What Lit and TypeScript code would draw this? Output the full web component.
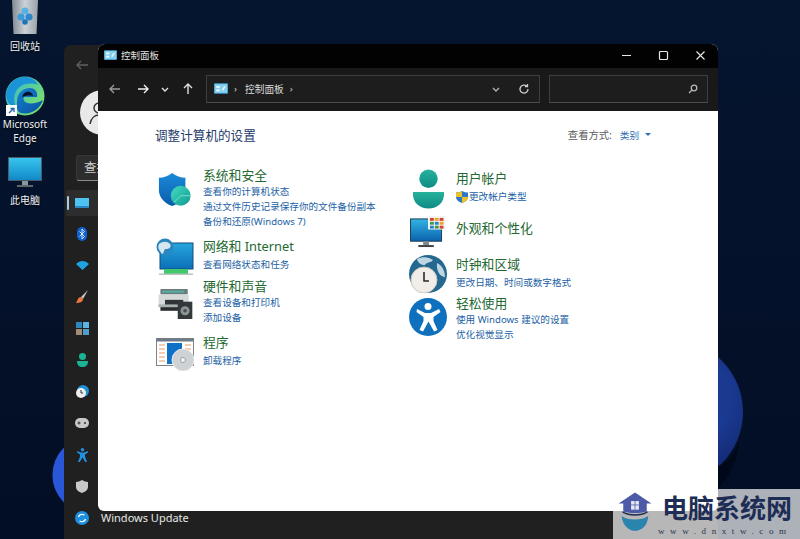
import { LitElement, css, html } from 'lit';
import { customElement } from 'lit/decorators.js';

const cpIcon = (w: number, h: number) => html`<svg width=${w} height=${h} viewBox="0 0 16 12">
  <rect width="16" height="12" rx="1" fill="#3f9fd0"/>
  <rect x="1" y="1" width="14" height="10" fill="#86d0ee"/>
  <path d="M2.500 3h4v2h-4zM9 7.500l3-4.500 1.200 1-3 4.500zM2.500 7h4v2h-4z" fill="#f2f8fc"/>
</svg>`;

const arrow = (d: string, color: string) => html`<svg width="14" height="14" viewBox="0 0 14 14" fill="none" stroke=${color} stroke-width="1.4"><path d=${d}/></svg>`;

const ICONS: Record<string, unknown> = {
  shield: html`<svg width="36" height="36" viewBox="0 0 38 38">
    <defs><linearGradient id="sh" x1="0" y1="0" x2="0" y2="1"><stop offset="0" stop-color="#1a8ad8"/><stop offset="1" stop-color="#0b5cab"/></linearGradient>
    <linearGradient id="sg" x1="0" y1="0" x2="1" y2="1"><stop offset="0" stop-color="#45dcc0"/><stop offset="1" stop-color="#0f9a94"/></linearGradient></defs>
    <path d="M16 1c4 3 9 5 14 5v13c0 8-6 14-14 17C8 33 2 27 2 19V6c5 0 10-2 14-5z" fill="url(#sh)"/>
    <circle cx="25" cy="25" r="10.500" fill="url(#sg)"/><path d="M25 25l-7 7M25 25h10" stroke="#8cebd8" stroke-width=".8"/>
  </svg>`,
  network: html`<svg width="38" height="38" viewBox="0 0 38 38">
    <defs><linearGradient id="nt" x1="0" y1="0" x2="0" y2="1"><stop offset="0" stop-color="#27a6dc"/><stop offset="1" stop-color="#0b6fb8"/></linearGradient></defs>
    <rect x="4" y="5" width="33" height="26" fill="url(#nt)" stroke="#0d4f7f"/>
    <rect x="8" y="31" width="24" height="5" fill="#42c76a"/><rect x="3" y="35.500" width="34" height="1.500" fill="#b8c4c0"/>
    <circle cx="9" cy="9" r="8.500" fill="#2a86bd"/><path d="M3 6c4-3 8-3 11 0 2 3-1 5-4 5s-1 4-4 5c-2-3-5-6-3-10z" fill="#d4e7f0"/>
  </svg>`,
  printer: html`<svg width="38" height="31" viewBox="0 0 38 34">
    <rect x="3" y="1" width="30" height="6" rx="1" fill="#6f7a7c"/><rect x="1" y="7" width="33" height="14" fill="#d5dad9"/>
    <rect x="8" y="13" width="20" height="6" fill="#303436"/><rect x="1" y="18" width="33" height="3" fill="#a9b0b0"/>
    <rect x="3" y="21" width="26" height="4" fill="#2b2d2e"/><rect x="5" y="3" width="24" height="2" fill="#4cb6a6"/>
    <rect x="22" y="15" width="16" height="19" fill="#33383a"/><circle cx="30" cy="25" r="5" fill="#8d9496"/><circle cx="30" cy="25" r="2" fill="#4a4f51"/>
  </svg>`,
  programs: html`<svg width="38" height="33" viewBox="0 0 38 33">
    <rect x=".5" y=".5" width="37" height="27" fill="#fff" stroke="#7d8287"/><rect x=".5" y=".5" width="37" height="3" fill="#6f7b86"/>
    <rect x="11" y="5" width="15" height="21" fill="#0f70c8"/>
    <path d="M3 7h6M3 11h6M3 15h6M3 19h6M3 23h6M29 7h6M29 11h6" stroke="#e79a6a" stroke-width="1.200"/>
    <circle cx="27" cy="22" r="11" fill="#cfd2d4"/><circle cx="27" cy="22" r="11" fill="none" stroke="#e8e9ea"/><circle cx="27" cy="22" r="2.500" fill="#f4f4f4" stroke="#9c9fa1"/>
  </svg>`,
  user: html`<svg width="33" height="40" viewBox="0 0 34 40">
    <defs><linearGradient id="us" x1="0" y1="0" x2="0" y2="1"><stop offset="0" stop-color="#26b39c"/><stop offset="1" stop-color="#0e8a84"/></linearGradient></defs>
    <circle cx="17" cy="9.500" r="9.500" fill="url(#us)"/><path d="M1 23h32c1 11-7 17-16 17S0 34 1 23z" fill="url(#us)"/>
  </svg>`,
  display: html`<svg width="36" height="32" viewBox="0 0 36 33">
    <defs><linearGradient id="ds" x1="0" y1="0" x2="0" y2="1"><stop offset="0" stop-color="#32b4e3"/><stop offset="1" stop-color="#0b62ae"/></linearGradient></defs>
    <rect x="0" y="3" width="32" height="23" fill="url(#ds)" stroke="#1d3c50"/><rect x="13" y="26" width="6" height="4" fill="#7d8a90"/><rect x="8" y="30" width="16" height="2" fill="#3a4043"/>
    <rect x="18" y="0" width="18" height="14" rx="1" fill="#f5f5f5"/>
    <rect x="20" y="2" width="4" height="3" fill="#d8402d"/><rect x="25" y="2" width="4" height="3" fill="#e8a722"/><rect x="30" y="2" width="4" height="3" fill="#d8402d"/>
    <rect x="20" y="6" width="4" height="3" fill="#3c9b45"/><rect x="25" y="6" width="4" height="3" fill="#2d7ed0"/><rect x="30" y="6" width="4" height="3" fill="#e8a722"/>
    <rect x="20" y="10" width="4" height="3" fill="#2d7ed0"/><rect x="25" y="10" width="4" height="3" fill="#3c9b45"/><rect x="30" y="10" width="4" height="3" fill="#d8402d"/>
  </svg>`,
  clock: html`<svg width="38" height="38" viewBox="0 0 38 38">
    <circle cx="19" cy="19" r="19" fill="#25688f"/><path d="M8 4c6-3 12-2 16 1-2 3-7 2-8 5-4 0-7-2-8-6zM28 8c5 2 8 8 8 14-4 0-9-5-8-14z" fill="#bfd5e2"/>
    <circle cx="15" cy="25" r="13" fill="#f1eee9"/><circle cx="15" cy="25" r="13" fill="none" stroke="#c9c4bd"/>
    <path d="M15 17v9h5" fill="none" stroke="#2b2b2b" stroke-width="1.600"/>
  </svg>`,
  access: html`<svg width="38" height="38" viewBox="0 0 38 38">
    <circle cx="19" cy="19" r="19" fill="#0f71bd"/>
    <circle cx="19" cy="8.500" r="3.500" fill="#fff"/>
    <path d="M8 11l8 4h6l8-4 1.500 3-7 5v4l4 9-3.500 1.500-5.500-10-5.500 10L10.500 32l4-9v-4l-7-5z" fill="#fff"/>
  </svg>`,
};

const SIDE_ICONS = [
  html`<svg width="14" height="10" viewBox="0 0 14 10"><rect width="14" height="10" fill="#4fc3f0"/><rect y="8" width="14" height="2" fill="#2b86c4"/></svg>`,
  html`<svg width="10" height="14" viewBox="0 0 10 14"><rect width="10" height="14" rx="5" fill="#0f62d0"/><path d="M2.500 4.500l5 5L5 12V2l2.500 2.500-5 5" fill="none" stroke="#fff" stroke-width=".8"/></svg>`,
  html`<svg width="13" height="9" viewBox="0 0 13 9"><path d="M0 3c4-4 9-4 13 0L6.500 9z" fill="#1fa3e0"/></svg>`,
  html`<svg width="14" height="14" viewBox="0 0 14 14"><path d="M13 0L6 7l2 2z" fill="#c9c9c9"/><path d="M6 7c-3 0-3 3-5 6 4 0 7-1 7-4z" fill="#e8793a"/></svg>`,
  html`<svg width="13" height="13" viewBox="0 0 13 13"><rect width="6" height="6" fill="#2f86b8"/><rect x="7" width="6" height="6" fill="#5cb4e0"/><rect y="7" width="6" height="6" fill="#a08a78"/><rect x="7" y="7" width="6" height="6" fill="#4d9ecb"/></svg>`,
  html`<svg width="11" height="14" viewBox="0 0 11 14"><circle cx="5.500" cy="3.500" r="3.500" fill="#1ab393"/><path d="M0 8h11c0 4-2 6-5.500 6S0 12 0 8z" fill="#1ab393"/></svg>`,
  html`<svg width="14" height="14" viewBox="0 0 14 14"><circle cx="8" cy="6" r="6" fill="#1f8fd6"/><circle cx="6" cy="8" r="5" fill="#eee"/><path d="M6 5v3h2" fill="none" stroke="#333"/></svg>`,
  html`<svg width="14" height="10" viewBox="0 0 14 10"><rect width="14" height="10" rx="5" fill="#c8c8c8"/><path d="M2.500 5h3M4 3.500v3" stroke="#333"/><circle cx="10" cy="5" r="1" fill="#333"/></svg>`,
  html`<svg width="11" height="14" viewBox="0 0 11 14"><circle cx="5.500" cy="1.800" r="1.800" fill="#1f8fe0"/><path d="M0 3l4 1.500h3L11 3v1.500L8 6.500v2L10 14H8.200L5.500 9.500 2.800 14H1l2-5.500v-2L0 4.500z" fill="#1f8fe0"/></svg>`,
  html`<svg width="12" height="13" viewBox="0 0 12 13"><path d="M6 0c2 1 4 2 6 2v5c0 3-3 5-6 6-3-1-6-3-6-6V2c2 0 4-1 6-2z" fill="#c9c9c9"/></svg>`,
  html`<svg width="14" height="14" viewBox="0 0 14 14"><circle cx="7" cy="7" r="7" fill="#1d8fe0"/><path d="M3.500 6c.5-2 3-3.500 6-2M10.500 8c-.5 2-3 3.500-6 2" fill="none" stroke="#fff" stroke-width="1.300"/></svg>`,
];

// iconY: how far the icon sits below the top of its title line
type Cat = { icon: string; iconY: number; title: string; links: string[]; shield?: boolean };

const LEFT: Cat[] = [
  { icon: 'shield', iconY: 5, title: '系统和安全', links: ['查看你的计算机状态', '通过文件历史记录保存你的文件备份副本', '备份和还原(Windows 7)'] },
  { icon: 'network', iconY: 0, title: '网络和 Internet', links: ['查看网络状态和任务'] },
  { icon: 'printer', iconY: 10, title: '硬件和声音', links: ['查看设备和打印机', '添加设备'] },
  { icon: 'programs', iconY: 4.5, title: '程序', links: ['卸载程序'] },
];

const RIGHT: Cat[] = [
  { icon: 'user', iconY: -1, title: '用户帐户', links: ['更改帐户类型'], shield: true },
  { icon: 'display', iconY: -4, title: '外观和个性化', links: [] },
  { icon: 'clock', iconY: -1, title: '时钟和区域', links: ['更改日期、时间或数字格式'] },
  { icon: 'access', iconY: 3, title: '轻松使用', links: ['使用 Windows 建议的设置', '优化视觉显示'] },
];

@customElement('app-root')
export class AppRoot extends LitElement {
  static styles = css`
    :host {
      display: block;
      width: 800px;
      height: 539px;
      overflow: hidden;
      font-family: 'Noto Sans', 'Noto Sans CJK SC', sans-serif;
    }
    .desktop {
      position: relative;
      width: 800px;
      height: 539px;
      overflow: hidden;
      background: linear-gradient(180deg, #06152f 0%, #04122b 40%, #020e24 100%);
    }
    .bloom {
      position: absolute;
      left: 0;
      top: 0;
    }
    .desk-icon {
      position: absolute;
      left: 0;
      width: 50px;
      display: flex;
      flex-direction: column;
      align-items: center;
      color: #eef2f6;
      font-size: 10px;
      line-height: 14px;
      text-align: center;
      text-shadow: 0 1px 2px #000;
    }
    .bin { top: 0; }
    .bin div { margin-top: 4px; }
    .edge { top: 76px; }
    .pc { top: 157px; }
    .pc div { margin-top: 5px; }
    .settings {
      position: absolute;
      left: 64px;
      top: 45px;
      width: 654px;
      height: 494px;
      background: #202020;
      border-radius: 7px 7px 0 0;
      overflow: hidden;
    }
    .settings .back {
      padding: 12px 0 0 11px;
      height: 23px;
      margin-top: -2px;
      margin-bottom: 2px;
    }
    .avatar {
      width: 45px;
      height: 45px;
      margin: 12px 0 0 16px;
      border-radius: 50%;
      background: #e9e9e9;
      overflow: hidden;
    }
    .find {
      margin: 20px 0 0 12px;
      width: 160px;
      height: 26px;
      box-sizing: border-box;
      background: #2d2d2d;
      border: 1px solid #383838;
      border-bottom-color: #8a8a8a;
      border-radius: 3px;
      color: #cfcfcf;
      font-size: 12.500px;
      line-height: 24px;
      padding-left: 7px;
    }
    .nav {
      margin-top: 6px;
    }
    .nav-row {
      position: relative;
      box-sizing: border-box;
      height: 31.500px;
      padding: 3px 0;
      background-clip: content-box;
      display: flex;
      align-items: center;
      margin-left: 2px;
    }
    .nav-row.on {
      background-color: #2d2d2d;
    }
    .nav-row.on::before {
      content: '';
      position: absolute;
      left: 1px;
      top: 9px;
      width: 2px;
      height: 14px;
      background: #a5cde8;
      border-radius: 1px;
    }
    .nav-ico {
      width: 32px;
      display: flex;
      justify-content: center;
    }
    .nav-row span {
      margin-left: 3px;
      color: #e6e6e6;
      font-size: 11px;
    }
    .cp {
      position: absolute;
      left: 98px;
      top: 44px;
      width: 620px;
      height: 467px;
      display: flex;
      flex-direction: column;
      border-radius: 7px 7px 6px 6px;
      overflow: hidden;
      background: #fff;
    }
    .title {
      height: 24px;
      flex: none;
      box-sizing: border-box;
      padding: 0 0 2px 6px;
      background: #020202;
      display: flex;
      align-items: center;
      color: #e4e4e4;
      font-size: 9.500px;
    }
    .title span {
      margin-left: 4px;
    }
    .win-btns {
      margin-left: auto;
      margin-right: -1px;
      display: flex;
    }
    .win-btns div {
      width: 37px;
      height: 22px;
      display: flex;
      align-items: center;
      justify-content: center;
    }
    .tools {
      height: 43px;
      flex: none;
      box-sizing: border-box;
      background: #191919;
      display: flex;
      align-items: center;
      padding: 0 10px 2px 9px;
    }
    .navs {
      display: flex;
      align-items: center;
      width: 99px;
      margin-left: -5px;
      padding-right: 5px;
    }
    .navs div {
      width: 25px;
      display: flex;
      justify-content: center;
    }
    .navs .fwd { margin-left: 3px; }
    .navs .recent { margin-left: -3px; }
    .navs .up { margin-left: -2px; }
    .box {
      height: 28px;
      box-sizing: border-box;
      border: 1px solid #3f3f3f;
      border-bottom-color: #4c4c4c;
      background: #1d1d1d;
      display: flex;
      align-items: center;
      color: #dcdcdc;
      font-size: 9.700px;
    }
    .addr {
      width: 334px;
      padding: 0 9px 0 7px;
    }
    .addr .sep {
      margin: 0 8px 0 6px;
      color: #cfcfcf;
    }
    .addr .end {
      margin-left: auto;
      display: flex;
      align-items: center;
      gap: 15px;
    }
    .search {
      width: 159px;
      margin-left: 9px;
      justify-content: flex-end;
      padding-right: 9px;
    }
    .content {
      flex: 1;
      padding: 15px 67px 0 57px;
    }
    .head {
      display: flex;
      justify-content: space-between;
      align-items: center;
      height: 17px;
    }
    .head h1 {
      margin: 0;
      font-size: 12.600px;
      font-weight: 400;
      color: #1f3b6b;
    }
    .view {
      font-size: 10.300px;
      color: #5c5c5c;
      display: flex;
      align-items: center;
    }
    .view b {
      font-size: 9.600px;
      font-weight: 400;
      color: #2b6fb5;
      margin-left: 8px;
    }
    .view i {
      margin-left: 6px;
      border: 3px solid transparent;
      border-top: 3px solid #2b6fb5;
      border-bottom: 0;
    }
    .cols {
      display: flex;
    }
    .col {
      display: flex;
      flex-direction: column;
    }
    .col.l {
      width: 253px;
      padding-top: 24px;
    }
    .col.r {
      padding-top: 27px;
    }
    .cat {
      display: flex;
    }
    .cat .ico {
      width: 40px;
      height: 0;
      margin-right: 8px;
      flex: none;
      display: flex;
      justify-content: center;
      align-items: flex-start;
      position: relative;
    }
    .cat h2 {
      margin: 0 0 1px;
      font-size: 12.800px;
      line-height: 16px;
      font-weight: 400;
      color: #22682f;
      white-space: nowrap;
    }
    .cat.single h2 {
      margin-bottom: 3px;
    }
    .cat a {
      display: flex;
      align-items: center;
      font-size: 9.600px;
      line-height: 15px;
      color: #1c5fa5;
      white-space: nowrap;
    }
    .cat a svg {
      margin-right: 1px;
    }
    .l .cat:nth-child(2) { margin-top: 9px; }
    .l .cat:nth-child(3) { margin-top: 6px; }
    .l .cat:nth-child(4) { margin-top: 8.500px; }
    .r .cat:nth-child(2) { margin-top: 16px; }
    .r .cat:nth-child(3) { margin-top: 19px; }
    .r .cat:nth-child(4) { margin-top: 5px; }
    .mark {
      position: absolute;
      left: 613px;
      top: 489px;
      width: 187px;
      height: 50px;
      background: rgba(255, 255, 255, 0.68);
      display: flex;
    }
    .mark .logo {
      margin-left: 4px;
      flex: none;
    }
    .mark .txt {
      margin-left: 9px;
      padding-top: 6px;
    }
    .mark .big {
      font-family: 'Liberation Serif', 'Noto Sans CJK SC', serif;
      font-weight: 700;
      font-size: 26px;
      line-height: 30px;
      color: #1d2d55;
      white-space: nowrap;
    }
    .mark .url {
      font-family: 'Liberation Serif', serif;
      font-size: 9px;
      letter-spacing: 5.600px;
      line-height: 12px;
      color: #2a3550;
      margin-left: -4px;
      white-space: nowrap;
    }
  `;

  renderCat(c: Cat) {
    return html`<div class="cat ${c.links.length === 1 ? 'single' : ''}">
      <div class="ico" style="top:${c.iconY}px">${ICONS[c.icon]}</div>
      <div>
        <h2>${c.title}</h2>
        ${c.links.map((l) => html`<a>
          ${c.shield ? html`<svg width="12" height="12" viewBox="0 0 12 12"><path d="M6 0c2 1 4 1.500 6 1.500V6c0 3-3 5-6 6-3-1-6-3-6-6V1.500C2 1.500 4 1 6 0z" fill="#2b78c6"/><path d="M6 0v6H0V1.500C2 1.500 4 1 6 0zM6 6h6c0 3-3 5-6 6z" fill="#f0c028"/></svg>` : ''}
          ${l}</a>`)}
      </div>
    </div>`;
  }

  render() {
    return html`<div class="desktop">
      <svg class="bloom" width="800" height="539" viewBox="0 0 800 539">
        <defs>
          <radialGradient id="bl" cx="0.6" cy="0.4" r="0.6"><stop offset="0.5" stop-color="#1a3a92"/><stop offset="0.85" stop-color="#142c78"/><stop offset="1" stop-color="#0a1a50"/></radialGradient>
        </defs>
        <circle cx="670" cy="412" r="73" fill="url(#bl)"/>
        <path d="M718 466c8-2 16-12 21-24-1 20-12 38-21 46z" fill="#01081a"/>
        <circle cx="91" cy="475" r="38.600" fill="#2a56d8"/>
      </svg>

      <div class="desk-icon bin">
        <svg width="28" height="35" viewBox="0 0 28 35">
          <defs><linearGradient id="bn" x1="0" y1="0" x2="1" y2="0"><stop offset="0" stop-color="#7f8a91"/><stop offset="0.5" stop-color="#ccd3d8"/><stop offset="1" stop-color="#98a2a8"/></linearGradient></defs>
          <path d="M1 0h26l-1.500 34h-23z" fill="url(#bn)"/>
          <circle cx="10" cy="17" r="3.600" fill="#3b9ad8"/><circle cx="18" cy="17" r="3.600" fill="#2f86c8"/><circle cx="14" cy="11" r="3.600" fill="#58b2e4"/><circle cx="14" cy="22" r="2.800" fill="#1f74b8"/>
        </svg>
        <div>回收站</div>
      </div>
      <div class="desk-icon edge">
        <svg width="40" height="41" viewBox="0 0 40 41">
          <defs><linearGradient id="eg" x1="0" y1="0" x2="1" y2="0.700"><stop offset="0" stop-color="#2fb5d8"/><stop offset="1" stop-color="#7ae06a"/></linearGradient>
          <linearGradient id="eb" x1="0" y1="0" x2="1" y2="1"><stop offset="0" stop-color="#1482d0"/><stop offset="1" stop-color="#0b4ea0"/></linearGradient></defs>
          <circle cx="20" cy="20" r="19.500" fill="url(#eg)"/>
          <path d="M1 19C2 9 10 1 20 1c6 0 11 3 13 8-5-2-12-2-17 1C9 14 7 24 12 33 5 30 1 25 1 19z" fill="#1b93d8"/>
          <path d="M12 26c0-9 6-14 13-14 5 0 8 4 7 9H21c-3-1-4 4 1 6 5 1 11 0 16-3-3 9-12 15-22 13-5-2-4-6-4-11z" fill="url(#eb)"/>
          <path d="M17 21c1-4 4-6 8-5 2 1 3 3 3 4-4-1-8 0-11 1z" fill="#05122c"/>
          <rect x="1" y="29" width="11" height="11" fill="#fff"/><path d="M4 37l4-4M5.500 32.500H9V36" stroke="#1b5fa8" stroke-width="1.300" fill="none"/>
        </svg>
        <div>Microsoft<br />Edge</div>
      </div>
      <div class="desk-icon pc">
        <svg width="34" height="31" viewBox="0 0 34 31">
          <defs><linearGradient id="pc" x1="0" y1="0" x2="0" y2="1"><stop offset="0" stop-color="#37c5ee"/><stop offset="1" stop-color="#1189c8"/></linearGradient></defs>
          <rect x="0" y="0" width="34" height="24" fill="#4b5a63"/><rect x="1" y="1" width="32" height="22" fill="url(#pc)"/>
          <rect x="14" y="24" width="6" height="4" fill="#8b979c"/><rect x="9" y="28" width="16" height="2" fill="#5d676c"/>
        </svg>
        <div>此电脑</div>
      </div>

      <div class="settings">
        <div class="back">${arrow('M13 7H2M6 3L2 7l4 4', '#5f5f5f')}</div>
        <div class="avatar">
          <svg width="45" height="45" viewBox="0 0 45 45"><circle cx="19" cy="18" r="5" fill="none" stroke="#333" stroke-width="1.500"/><path d="M10 34c1-6 5-9 9-9" fill="none" stroke="#333" stroke-width="1.500"/></svg>
        </div>
        <div class="find">查找设置</div>
        <div class="nav">
          ${SIDE_ICONS.map((ic, i) => html`<div class="nav-row ${i === 0 ? 'on' : ''}">
            <div class="nav-ico">${ic}</div>
            ${i === SIDE_ICONS.length - 1 ? html`<span>Windows Update</span>` : ''}
          </div>`)}
        </div>
      </div>

      <div class="cp">
        <div class="title">
          ${cpIcon(13, 10)}<span>控制面板</span>
          <div class="win-btns">
            <div><svg width="11" height="11" viewBox="0 0 11 11"><path d="M1 5.500h9" stroke="#e8e8e8"/></svg></div>
            <div><svg width="11" height="11" viewBox="0 0 11 11"><rect x="1.500" y="1.500" width="8" height="8" rx="1" fill="none" stroke="#e8e8e8" stroke-width="1.200"/></svg></div>
            <div><svg width="11" height="11" viewBox="0 0 11 11"><path d="M1.500 1.500l8 8M9.500 1.500l-8 8" stroke="#e8e8e8" stroke-width="1.100"/></svg></div>
          </div>
        </div>
        <div class="tools">
          <div class="navs">
            <div>${arrow('M12 7H2M6 3L2 7l4 4', '#9a9a9a')}</div>
            <div class="fwd">${arrow('M2 7h10M8 3l4 4-4 4', '#f0f0f0')}</div>
            <div class="recent">${arrow('M4 6l3 3 3-3', '#e0e0e0')}</div>
            <div class="up">${arrow('M7 12V2M3 6l4-4 4 4', '#e0e0e0')}</div>
          </div>
          <div class="box addr">
            ${cpIcon(14, 11)}<span class="sep">›</span>控制面板<span class="sep">›</span>
            <div class="end">
              ${arrow('M4 6l3 3 3-3', '#b0b0b0')}
              <svg width="12" height="12" viewBox="0 0 12 12" fill="none" stroke="#cfcfcf" stroke-width="1.300"><path d="M10 6a4 4 0 1 1-1.200-2.800M9.500 1v2.500H7"/></svg>
            </div>
          </div>
          <div class="box search">
            <svg width="10" height="10" viewBox="0 0 10 10" fill="none" stroke="#b8b8b8" stroke-width="1.300"><circle cx="6" cy="4" r="2.800"/><path d="M4 6L1 9"/></svg>
          </div>
        </div>
        <div class="content">
          <div class="head">
            <h1>调整计算机的设置</h1>
            <div class="view">查看方式:<b>类别</b><i></i></div>
          </div>
          <div class="cols">
            <div class="col l">${LEFT.map((c) => this.renderCat(c))}</div>
            <div class="col r">${RIGHT.map((c) => this.renderCat(c))}</div>
          </div>
        </div>
      </div>

      <div class="mark">
        <svg class="logo" width="36" height="46" viewBox="0 0 46 50">
          <path d="M23 0L2 14h6v10c5 3 25 3 30 0V14h6z" fill="#4c5aa8"/><rect x="18" y="11" width="10" height="11" fill="#e8e8f0"/><path d="M23 11v11M18 16h10" stroke="#4c5aa8"/>
          <path d="M7 24c8 5 24 5 32 0v2c-8 5-24 5-32 0z" fill="#1c2a55"/>
          <path d="M6 30c7 6 26 6 34 0-1 14-10 19-17 19S7 43 6 30z" fill="#2a84ad"/>
        </svg>
        <div class="txt">
          <div class="big">电脑系统网</div>
          <div class="url">www.dnxtw.com</div>
        </div>
      </div>
    </div>`;
  }
}
